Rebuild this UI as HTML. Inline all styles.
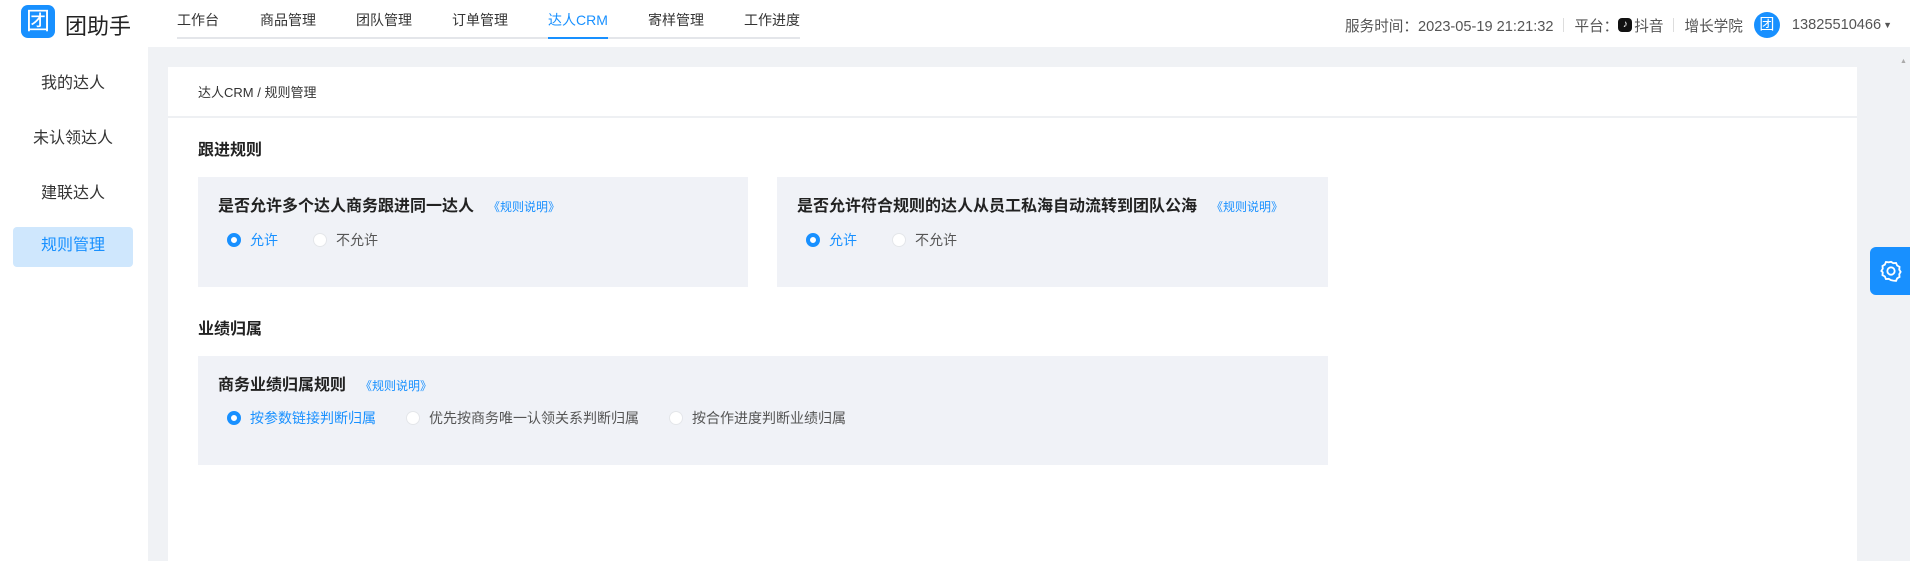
<!DOCTYPE html>
<html><head><meta charset="utf-8"><style>
*{margin:0;padding:0;box-sizing:border-box}
body{width:1910px;height:561px;overflow:hidden;background:#f0f2f5;font-family:"Liberation Sans","Noto Sans CJK SC",sans-serif;color:#333;position:relative}
.abs{position:absolute;white-space:nowrap}
.header{position:absolute;left:0;top:0;width:1910px;height:47px;background:#fff}
.side{position:absolute;left:0;top:47px;width:148px;height:514px;background:#fff}
.tab{position:absolute;top:10px;font-size:14px;color:#333}
.card{position:absolute;left:168px;top:67px;width:1689px;height:494px;background:#fff}
.panel{position:absolute;background:#f0f2f7}
.pt{position:absolute;font-size:16px;font-weight:bold;color:#222;white-space:nowrap}
.pt span{font-size:12px;font-weight:normal;color:#1890ff;margin-left:14px}
.r{position:absolute;font-size:14px;white-space:nowrap;display:flex;align-items:center;color:#555}
.dot{width:14px;height:14px;border-radius:50%;background:#fff;border:1px solid #e4e6ea;margin-right:9px}
.dot.on{background:#fff;border:4px solid #1890ff}
</style></head><body>
<div class="header">
 <div class="abs" style="left:21px;top:5px;width:34px;height:33px;background:#1890ff;border-radius:7px;color:#fff;font-size:24px;text-align:center;line-height:33px">团</div>
 <div class="abs" style="left:65px;top:9px;font-size:22px;color:#222">团助手</div>
 <div class="abs" style="left:177px;top:37px;width:623px;height:2px;background:#e4e6ea"></div>
 <div class="tab" style="left:177px">工作台</div>
 <div class="tab" style="left:260px">商品管理</div>
 <div class="tab" style="left:356px">团队管理</div>
 <div class="tab" style="left:452px">订单管理</div>
 <div class="tab" style="left:548px;color:#1890ff">达人CRM</div>
 <div class="abs" style="left:548px;top:37px;width:60px;height:2px;background:#1890ff"></div>
 <div class="tab" style="left:648px">寄样管理</div>
 <div class="tab" style="left:744px">工作进度</div>
 <div class="abs" style="left:1345px;top:12px;font-size:14.6px;color:#555;display:flex;align-items:center">服务时间：2023-05-19 21:21:32<span style="display:inline-block;width:1px;height:14px;background:#ddd;margin:0 10px"></span>平台：<span style="display:inline-block;width:14px;height:14px;border-radius:4px;background:#111;color:#fff;font-size:10px;text-align:center;line-height:14px;margin-right:2px">♪</span>抖音<span style="display:inline-block;width:1px;height:14px;background:#ddd;margin:0 10px"></span>增长学院<span style="display:inline-block;width:26px;height:26px;border-radius:50%;background:#1890ff;color:#fff;font-size:15px;text-align:center;line-height:26px;margin:0 12px 0 11px">团</span>13825510466<span style="font-size:9px;margin-left:2px">▼</span></div>
</div>
<div class="side">
 <div class="abs" style="left:41px;top:22px;font-size:16px">我的达人</div>
 <div class="abs" style="left:33px;top:77px;font-size:16px">未认领达人</div>
 <div class="abs" style="left:41px;top:132px;font-size:16px">建联达人</div>
 <div class="abs" style="left:13px;top:180px;width:120px;height:40px;background:#cfe7fd;border-radius:4px;color:#1890ff;font-size:16px;text-align:center;line-height:38px">规则管理</div>
</div>
<div class="card">
 <div class="abs" style="left:30px;top:15px;font-size:13px;color:#333">达人CRM / 规则管理</div>
 <div class="abs" style="left:0;top:49px;width:1689px;height:2px;background:#eef0f3"></div>
 <div class="abs" style="left:30px;top:69px;font-size:16px;font-weight:bold;color:#222">跟进规则</div>
 <div class="panel" style="left:30px;top:110px;width:550px;height:110px">
  <div class="pt" style="left:20px;top:15px">是否允许多个达人商务跟进同一达人<span>《规则说明》</span></div>
  <div class="r" style="left:29px;top:53px"><i class="dot on"></i><span style="color:#1890ff">允许</span><i class="dot" style="margin-left:35px"></i>不允许</div>
 </div>
 <div class="panel" style="left:609px;top:110px;width:551px;height:110px">
  <div class="pt" style="left:20px;top:15px">是否允许符合规则的达人从员工私海自动流转到团队公海<span>《规则说明》</span></div>
  <div class="r" style="left:29px;top:53px"><i class="dot on"></i><span style="color:#1890ff">允许</span><i class="dot" style="margin-left:35px"></i>不允许</div>
 </div>
 <div class="abs" style="left:30px;top:248px;font-size:16px;font-weight:bold;color:#222">业绩归属</div>
 <div class="panel" style="left:30px;top:289px;width:1130px;height:109px">
  <div class="pt" style="left:20px;top:15px">商务业绩归属规则<span>《规则说明》</span></div>
  <div class="r" style="left:29px;top:52px"><i class="dot on"></i><span style="color:#1890ff">按参数链接判断归属</span><i class="dot" style="margin-left:30px"></i>优先按商务唯一认领关系判断归属<i class="dot" style="margin-left:30px"></i>按合作进度判断业绩归属</div>
 </div>
</div>
<div class="abs" style="left:1870px;top:247px;width:40px;height:48px;background:#1890ff;border-radius:6px 0 0 6px"></div>
<svg class="abs" style="left:1880px;top:260px" width="22" height="22" viewBox="0 0 24 24" fill="none" stroke="#fff" stroke-width="2"><path d="M12 2l2.5 1.5 3-.3 1.2 2.8 2.6 1.5-.3 3 1.5 2.5-1.5 2.5.3 3-2.6 1.5-1.2 2.8-3-.3L12 22l-2.5-1.5-3 .3-1.2-2.8-2.6-1.5.3-3L1.5 12 3 9.5l-.3-3 2.6-1.5 1.2-2.8 3 .3z"/><circle cx="12" cy="12" r="4"/></svg>
<div class="abs" style="left:1900px;top:58px;font-size:7px;color:#aaa">▲</div>
</body></html>
